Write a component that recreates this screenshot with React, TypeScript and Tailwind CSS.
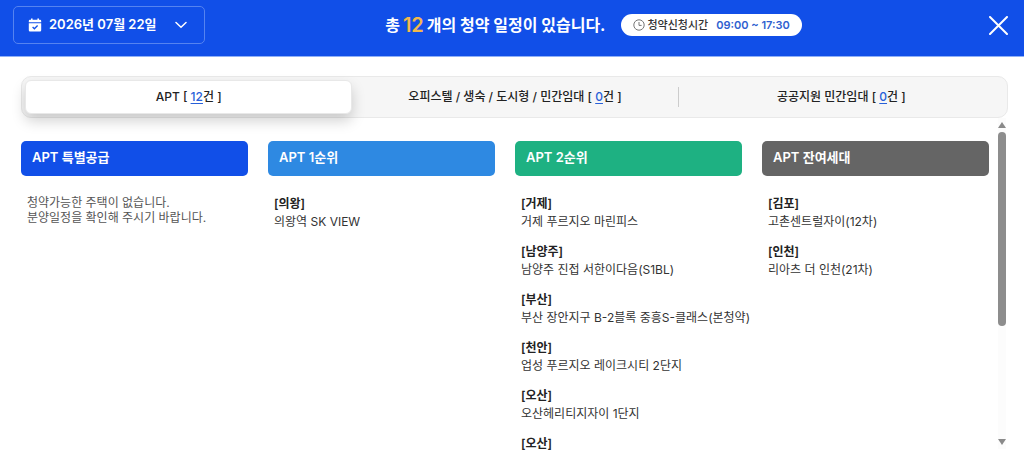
import { useState } from 'react'

type House = { region: string; name?: string }

type Group = { title: string; color: string; houses: House[] }

const tabs = [
  { label: 'APT', count: 12 },
  { label: '오피스텔 / 생숙 / 도시형 / 민간임대', count: 0 },
  { label: '공공지원 민간임대', count: 0 },
]

const groups: Group[] = [
  { title: 'APT 특별공급', color: 'bg-[#114fe8]', houses: [] },
  { title: 'APT 1순위', color: 'bg-[#2e89e2]', houses: [{ region: '의왕', name: '의왕역 SK VIEW' }] },
  {
    title: 'APT 2순위',
    color: 'bg-[#1eb182]',
    houses: [
      { region: '거제', name: '거제 푸르지오 마린피스' },
      { region: '남양주', name: '남양주 진접 서한이다음(S1BL)' },
      { region: '부산', name: '부산 장안지구 B-2블록 중흥S-클래스(본청약)' },
      { region: '천안', name: '업성 푸르지오 레이크시티 2단지' },
      { region: '오산', name: '오산헤리티지자이 1단지' },
      { region: '오산' },
    ],
  },
  {
    title: 'APT 잔여세대',
    color: 'bg-[#656565]',
    houses: [
      { region: '김포', name: '고촌센트럴자이(12차)' },
      { region: '인천', name: '리아츠 더 인천(21차)' },
    ],
  },
]

function CalendarIcon() {
  return (
    <svg className="h-[14px] w-[14px] shrink-0" viewBox="0 0 14 14" aria-hidden="true">
      <path
        fill="#fff"
        d="M3 0.5h1.6v1.3h4.8V0.5H11v1.3h1a1.2 1.2 0 0 1 1.2 1.2v1.2H0.8V3A1.2 1.2 0 0 1 2 1.8h1zM0.8 5.2h12.4v7.1a1.2 1.2 0 0 1-1.2 1.2H2a1.2 1.2 0 0 1-1.2-1.2z"
      />
      <path d="M4.6 9l1.8 1.8 3.2-3.3" fill="none" stroke="#114fe8" strokeWidth="1.3" />
    </svg>
  )
}

function ClockIcon() {
  return (
    <svg className="h-3 w-3 shrink-0" viewBox="0 0 12 12" fill="none" stroke="#777" aria-hidden="true">
      <circle cx="6" cy="6" r="5.2" />
      <path d="M6 3v3.4h2.6" />
    </svg>
  )
}

function Header() {
  return (
    <header className="flex items-start border-b border-[#8fb0f7] bg-[#114fe8] px-[13px] pt-[6px] pb-3 text-white">
      <button
        type="button"
        className="flex h-[38px] w-[192px] shrink-0 items-center rounded-[5px] border border-[#5583f0] pr-[17px] pl-[14px]"
      >
        <CalendarIcon />
        <span className="ml-[7px] text-[13px] font-semibold whitespace-nowrap">2026년 07월 22일</span>
        <svg className="ml-auto h-3 w-3" viewBox="0 0 12 12" fill="none" stroke="#fff" strokeWidth="1.5" aria-hidden="true">
          <path d="M1 3.5l5 4.7 5-4.7" strokeLinecap="round" />
        </svg>
      </button>
      <div className="flex h-[38px] flex-1 items-center justify-center gap-4 pr-1">
        <h1 className="flex items-center gap-[3px] text-base font-bold whitespace-nowrap">
          총 <strong className="text-xl leading-6 font-semibold text-[#f2b84b]">12</strong> 개의 청약 일정이 있습니다.
        </h1>
        <p className="flex h-[22px] items-center rounded-full bg-white px-3 text-[11px] whitespace-nowrap">
          <ClockIcon />
          <span className="ml-[2px] font-medium text-[#333]">청약신청시간</span>
          <span className="ml-2 font-semibold text-[#2f5fd0]">09:00 ~ 17:30</span>
        </p>
      </div>
      <button type="button" aria-label="닫기" className="flex h-[38px] w-[25px] items-center justify-center">
        <svg className="h-[19px] w-[19px]" viewBox="0 0 19 19" stroke="#fff" strokeWidth="2" aria-hidden="true">
          <path d="M1 1l17 17M18 1L1 18" strokeLinecap="round" />
        </svg>
      </button>
    </header>
  )
}

function HouseList({ houses }: { houses: House[] }) {
  if (houses.length === 0) {
    return (
      <p className="mt-[19px] px-[6px] text-xs leading-[15px] text-[#555]">
        청약가능한 주택이 없습니다.
        <br />
        분양일정을 확인해 주시기 바랍니다.
      </p>
    )
  }
  return (
    <ul className="mt-[19px] space-y-3 pl-[6px] text-xs leading-[18px] text-[#333]">
      {houses.map((house, i) => (
        <li key={i}>
          <strong className="block font-semibold text-[#222]">[{house.region}]</strong>
          {house.name && <span className="block whitespace-nowrap">{house.name}</span>}
        </li>
      ))}
    </ul>
  )
}

export default function App() {
  const [active, setActive] = useState(0)

  return (
    <div className="flex h-screen flex-col bg-white pb-[23px] font-['Inter','Noto_Sans_CJK_KR',sans-serif]">
      <Header />
      <nav
        role="tablist"
        className="mt-[19px] mr-4 ml-[21px] flex h-[42px] shrink-0 items-center rounded-[10px] border border-[#e9e9e9] bg-[#f6f6f6] px-[3px]"
      >
        {tabs.map((tab, i) => (
          <button
            key={tab.label}
            type="button"
            role="tab"
            aria-selected={i === active}
            onClick={() => setActive(i)}
            className={`flex-1 text-xs font-medium whitespace-nowrap text-[#222] ${
              i === active
                ? 'h-[34px] rounded-md border border-[#e8e8e8] bg-white shadow-[0_7px_14px_rgba(0,0,0,0.18)]'
                : 'h-5'
            } ${i === 1 && active === 0 ? 'border-r border-[#ccc]' : ''}`}
          >
            {tab.label} [ <span className="text-[#2860d8] underline underline-offset-2">{tab.count}</span>건 ]
          </button>
        ))}
      </nav>
      <div className="flex min-h-0 flex-1 pr-[18px] pl-[21px]">
        <div className="grid min-w-0 flex-1 auto-rows-max grid-cols-4 gap-5 overflow-y-auto pt-[23px] [scrollbar-width:none]">
          {groups.map((group) => (
            <section key={group.title}>
              <h2 className={`h-[35px] rounded-[5px] px-[11px] text-[13px] leading-[33px] font-semibold text-white ${group.color}`}>
                {group.title}
              </h2>
              <HouseList houses={group.houses} />
            </section>
          ))}
        </div>
        <div className="mb-1 ml-[9px] flex w-2 flex-col items-center bg-[#fcfcfc] py-1" aria-hidden="true">
          <svg className="h-[6px] w-2 shrink-0" viewBox="0 0 8 6">
            <path d="M4 0l4 6H0z" fill="#8a8a8a" />
          </svg>
          <div className="my-1 w-2 flex-1">
            <div className="h-[64%] rounded-full bg-[#8d8d8d]" />
          </div>
          <svg className="h-[6px] w-2 shrink-0" viewBox="0 0 8 6">
            <path d="M0 0h8L4 6z" fill="#8a8a8a" />
          </svg>
        </div>
      </div>
    </div>
  )
}
